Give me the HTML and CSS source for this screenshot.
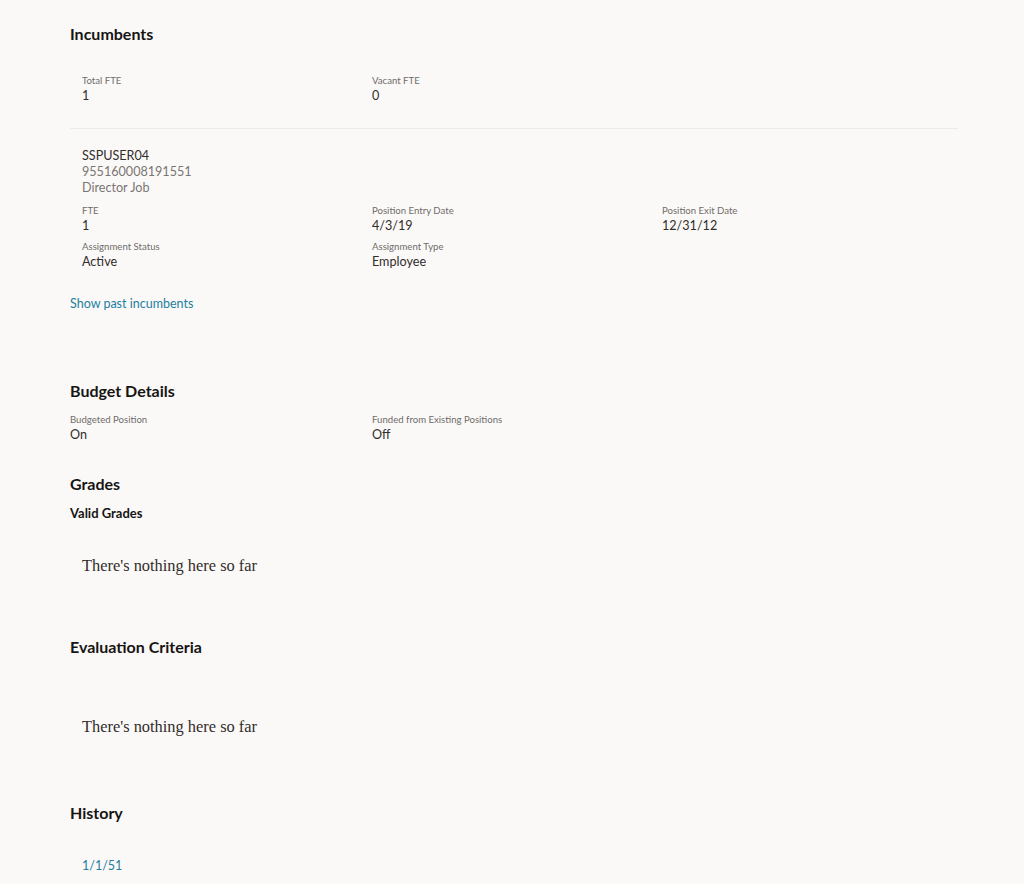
FILE: index.html
```html
<!DOCTYPE html>
<html lang="en">
<head>
  <meta charset="UTF-8" />
  <title>Position Details</title>
  <link rel="stylesheet" href="styles.css">
</head>
<body>
  <main class="page">
    <section class="incumbents">
      <h2 class="title">Incumbents</h2>
      <div class="grid summary">
        <div class="field"><div class="label">Total FTE</div><div class="value">1</div></div>
        <div class="field"><div class="label">Vacant FTE</div><div class="value">0</div></div>
      </div>
      <div class="person">
        <div class="name">SSPUSER04</div>
        <div class="sub">955160008191551</div>
        <div class="sub">Director Job</div>
        <div class="grid details">
          <div class="field"><div class="label">FTE</div><div class="value">1</div></div>
          <div class="field"><div class="label">Position Entry Date</div><div class="value">4/3/19</div></div>
          <div class="field"><div class="label">Position Exit Date</div><div class="value">12/31/12</div></div>
          <div class="field"><div class="label">Assignment Status</div><div class="value">Active</div></div>
          <div class="field"><div class="label">Assignment Type</div><div class="value">Employee</div></div>
        </div>
      </div>
      <a class="link past" href="#">Show past incumbents</a>
    </section>

    <section class="budget">
      <h2 class="title">Budget Details</h2>
      <div class="grid budget-grid">
        <div class="field"><div class="label">Budgeted Position</div><div class="value">On</div></div>
        <div class="field"><div class="label">Funded from Existing Positions</div><div class="value">Off</div></div>
      </div>
    </section>

    <section class="grades">
      <h2 class="title">Grades</h2>
      <h3 class="subtitle">Valid Grades</h3>
      <p class="empty grades-empty">There's nothing here so far</p>
    </section>

    <section class="criteria">
      <h2 class="title">Evaluation Criteria</h2>
      <p class="empty criteria-empty">There's nothing here so far</p>
    </section>

    <section class="history">
      <h2 class="title">History</h2>
      <a class="link date" href="#">1/1/51</a>
    </section>
  </main>
</body>
</html>
```

FILE: styles.css
```css
body { margin: 0; background: #fbf9f8; font-family: Lato, "Noto Sans", sans-serif; color: #312d2a; }
.page { width: 888px; padding: 24px 0 0 70px; }
section { display: flow-root; }
.title { font-size: 16px; line-height: 20px; font-weight: 700; color: #161513; margin: 0; }
.subtitle { font-size: 13px; line-height: 16px; font-weight: 700; color: #161513; margin: 11px 0 0 0; }

.grid { display: grid; }
.field .label { font-size: 9.6px; line-height: 13px; color: #6f6c69; }
.field .value { font-size: 12.6px; line-height: 14px; padding-top: 2px; color: #312d2a; }

.summary { grid-template-columns: 290px 290px; padding: 30px 0 25px 12px; border-bottom: 1px solid #eceae8; }
.person { padding: 19px 0 0 12px; }
.name { font-size: 12.6px; line-height: 16px; color: #312d2a; }
.sub { font-size: 12.6px; line-height: 16px; color: #7a7672; }
.details { grid-template-columns: 290px 290px 290px; row-gap: 7px; margin-top: 8px; }

.link { display: block; font-size: 12.5px; line-height: 16px; color: #227e9e; text-decoration: none; }
.past { margin-top: 27px; }

.budget { margin-top: 69px; }
.budget-grid { grid-template-columns: 302px 290px; margin-top: 12px; }

.grades { margin-top: 32px; }
.empty { font-family: "Liberation Serif", serif; font-size: 16.4px; line-height: 20px; color: #312d2a; margin: 0; padding-left: 12px; }
.grades-empty { margin-top: 35px; }

.criteria { margin-top: 61px; }
.criteria-empty { margin-top: 60px; }

.history { margin-top: 66px; }
.date { margin: 35px 0 0 12px; }
```
